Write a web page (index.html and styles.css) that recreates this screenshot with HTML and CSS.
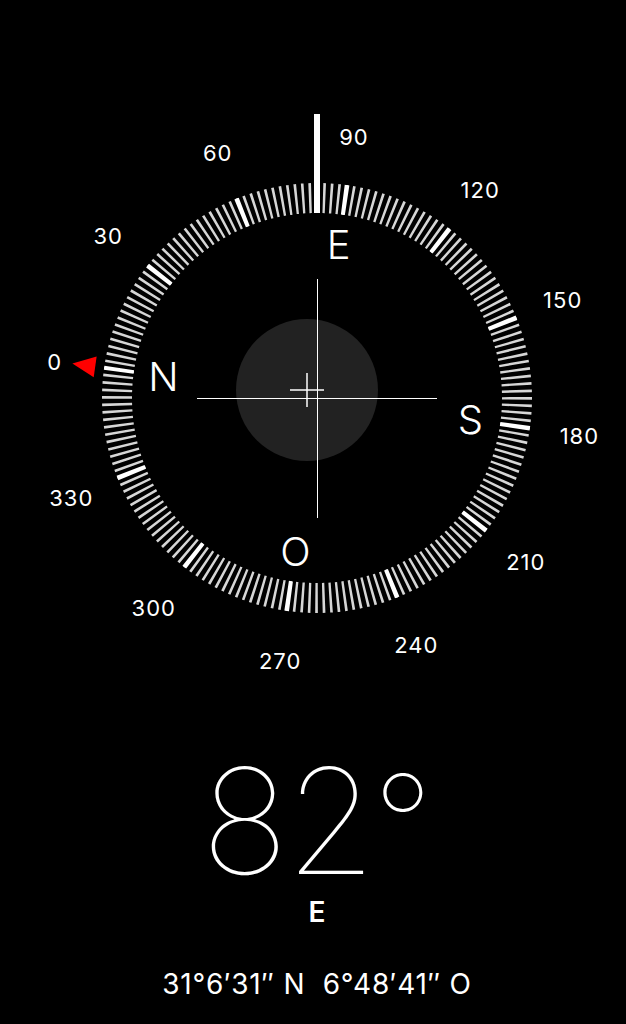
FILE: index.html
```html
<!DOCTYPE html>
<html lang="en">
<head>
  <meta charset="UTF-8" />
  <title>Compass</title>
  <meta name="viewport" content="width=device-width, initial-scale=1" />
  <link rel="stylesheet" href="styles.css">
</head>
<body>

  <main class="compass">

    <!-- Dial: centre at 317,398, rotated so the heading (82) sits under the needle -->
    <svg class="dial" viewBox="0 0 626 700" width="626" height="700">
      <g transform="rotate(-172 317 398)">
        <circle class="ticks" cx="317" cy="398" r="200" />
        <circle class="ticks-major" cx="317" cy="398" r="200" />
      </g>

      <polygon class="north-mark" points="317,151 306.5,174 327.5,174" transform="rotate(-82 317 398)" />

      <rect class="needle" x="314" y="114" width="6" height="99" />

      <!-- degree labels -->
      <text class="deg" x="54.6" y="370">0</text>
      <text class="deg" x="108.2" y="244">30</text>
      <text class="deg" x="217.7" y="161">60</text>
      <text class="deg" x="353.9" y="145">90</text>
      <text class="deg" x="480.2" y="198">120</text>
      <text class="deg" x="562.7" y="308">150</text>
      <text class="deg" x="579.4" y="444">180</text>
      <text class="deg" x="525.8" y="570">210</text>
      <text class="deg" x="416.3" y="653">240</text>
      <text class="deg" x="280.1" y="669">270</text>
      <text class="deg" x="153.8" y="616">300</text>
      <text class="deg" x="71.3" y="506">330</text>

      <!-- cardinal points -->
      <text class="cardinal" x="163.5" y="391">N</text>
      <text class="cardinal" x="338.6" y="259">E</text>
      <text class="cardinal" x="470.5" y="434">S</text>
      <text class="cardinal" x="295.4" y="566">O</text>

      <!-- level bubble + crosshair -->
      <circle class="bubble" cx="307" cy="390" r="71" />
      <line class="cross" x1="197" y1="398.5" x2="437" y2="398.5" />
      <line class="cross" x1="317.5" y1="279" x2="317.5" y2="518" />
      <line class="cross-small" x1="290" y1="390" x2="324" y2="390" />
      <line class="cross-small" x1="307" y1="373" x2="307" y2="407" />
    </svg>

    <section class="reading">
      <div class="heading">82<span class="heading-sign">°</span></div>
      <div class="direction">E</div>
      <div class="coords">31°6′31″ N&nbsp; 6°48′41″ O</div>
    </section>

  </main>

</body>
</html>
```

FILE: styles.css
```css
* {
  margin: 0;
  padding: 0;
  box-sizing: border-box;
}

html, body {
  height: 100%;
  background: #000;
  color: #fff;
  font-family: Inter, "Noto Sans", sans-serif;
  overflow: hidden;
}

.compass {
  display: flex;
  flex-direction: column;
}

.dial {
  display: block;
}

/* 180 ticks, one every 2 degrees (circumference 1256.64 / 180 = 6.9813) */
.ticks {
  fill: none;
  stroke: #d6d6d6;
  stroke-width: 30;
  stroke-dasharray: 2.5 4.4813;
  stroke-dashoffset: 1.25;
}

/* brighter tick every 30 degrees (1256.64 / 12 = 104.72) */
.ticks-major {
  fill: none;
  stroke: #fff;
  stroke-width: 30;
  stroke-dasharray: 4.4 100.3198;
  stroke-dashoffset: 2.2;
}

.north-mark {
  fill: #ff0000;
}

.needle {
  fill: #fff;
}

.deg {
  font-family: Inter, sans-serif;
  font-size: 22px;
  letter-spacing: 1px;
  fill: #fff;
  text-anchor: middle;
}

.cardinal {
  font-family: Inter, sans-serif;
  font-size: 40px;
  font-weight: 300;
  fill: #fff;
  text-anchor: middle;
}

.bubble {
  fill: #222;
}

.cross {
  stroke: #fff;
  stroke-width: 1;
}

.cross-small {
  stroke: #fff;
  stroke-width: 1.5;
}

.reading {
  display: flex;
  flex-direction: column;
  align-items: center;
  padding-left: 8px;
}

.heading {
  margin-top: 51px;
  font-size: 146px;
  font-weight: 100;
  line-height: 140px;
  letter-spacing: -3px;
}

.heading-sign {
  font-size: 0.9em;
  line-height: 0;
  vertical-align: 4px;
  letter-spacing: 0;
}

.direction {
  margin-top: 5px;
  font-size: 28px;
  font-weight: 600;
  line-height: 32px;
}

.coords {
  margin-top: 40px;
  font-size: 28px;
  letter-spacing: 0.8px;
  line-height: 32px;
  white-space: pre;
}
```
